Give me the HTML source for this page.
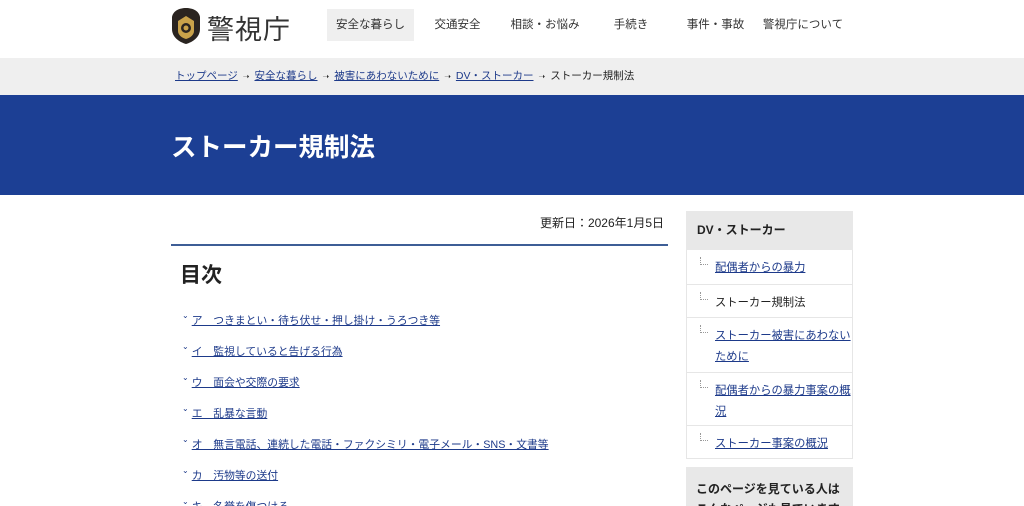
<!DOCTYPE html>
<html><head><meta charset="utf-8"><style>
*{margin:0;padding:0;box-sizing:border-box}
html,body{width:1024px;height:506px;overflow:hidden}
body{background:#fff;font-family:"Liberation Sans","Noto Sans CJK JP",sans-serif;color:#222;position:relative}
.hdr{position:absolute;top:0;left:0;width:1024px;height:58px;background:#fff}
.logo{position:absolute;left:171px;top:7px}
.site{position:absolute;left:207px;top:8px;font-size:27px;color:#333;letter-spacing:1px}
.nav{position:absolute;top:9px;height:32px;line-height:32px;font-size:11.5px;color:#333;text-align:center}
.bc{position:absolute;top:58px;left:0;width:1024px;height:37px;background:#efefef;font-size:10.5px;line-height:36px;padding-left:175px;color:#222}
.bc a{color:#1d3a8a;text-decoration:underline}
.bc .ar{margin:0 5px;font-size:8px}
.band{position:absolute;top:95px;left:0;width:1024px;height:100px;background:#1c3f94}
.band h1{position:absolute;left:171px;top:32px;color:#fff;font-size:25.5px;font-weight:bold}
.date{position:absolute;right:360px;top:214px;font-size:12px}
.rule{position:absolute;left:171px;top:244px;width:497px;height:2px;background:#3e5e96}
.mokuji{position:absolute;left:180px;top:259px;font-size:21px;font-weight:bold}
.lk{position:absolute;left:182px;font-size:10.8px;color:#1d3a8a}
.lk span{text-decoration:underline;margin-left:3px}
.lk i{font-style:normal;font-size:8px;vertical-align:top;position:relative;top:-1px}
.side{position:absolute;left:686px;top:211px;width:167px}
.sh{background:#e8e8e8;height:39px;line-height:39px;padding-left:11px;font-size:12px;font-weight:bold}
.si{border:1px solid #e6e6e6;border-top:none;padding:8px 0 8px 28px;font-size:11.3px;line-height:21px;position:relative;background:#fff;white-space:nowrap;overflow:hidden}
.si a{color:#1d3a8a;text-decoration:underline}
.si:before{content:"";position:absolute;left:13px;top:7px;width:7px;height:7px;border-left:1px dotted #999;border-bottom:1px dotted #999}
.s2{position:absolute;left:686px;top:467px;width:167px;height:50px;background:#e8e8e8;padding:12px 10px;font-size:12px;font-weight:bold;line-height:20px}
</style></head><body>
<div class="hdr">
<svg class="logo" width="30" height="38" viewBox="0 0 30 38"><path d="M15 1 C8 1 2 4 1 10 L1 22 C1 30 8 35 15 37 C22 35 29 30 29 22 L29 10 C28 4 22 1 15 1Z" fill="#2a2420"/><path d="M15 9 L23 14 L23 24 C23 28 19 31 15 32 C11 31 7 28 7 24 L7 14Z" fill="#c9a24a"/><circle cx="15" cy="21" r="5" fill="#2a2420"/><circle cx="15" cy="21" r="2.5" fill="#c9a24a"/></svg>
<div class="site">警視庁</div>
<div class="nav" style="left:327px;width:87px;background:#efefef">安全な暮らし</div>
<div class="nav" style="left:420px;width:75px">交通安全</div>
<div class="nav" style="left:500px;width:90px">相談・お悩み</div>
<div class="nav" style="left:595px;width:72px">手続き</div>
<div class="nav" style="left:678px;width:75px">事件・事故</div>
<div class="nav" style="left:758px;width:90px">警視庁について</div>
</div>
<div class="bc"><a>トップページ</a><span class="ar">➝</span><a>安全な暮らし</a><span class="ar">➝</span><a>被害にあわないために</a><span class="ar">➝</span><a>DV・ストーカー</a><span class="ar">➝</span>ストーカー規制法</div>
<div class="band"><h1>ストーカー規制法</h1></div>
<div class="date">更新日：2026年1月5日</div>
<div class="rule"></div>
<div class="mokuji">目次</div>
<div class="lk" style="top:312px"><i>⌄</i><span>ア　つきまとい・待ち伏せ・押し掛け・うろつき等</span></div>
<div class="lk" style="top:343px"><i>⌄</i><span>イ　監視していると告げる行為</span></div>
<div class="lk" style="top:374px"><i>⌄</i><span>ウ　面会や交際の要求</span></div>
<div class="lk" style="top:405px"><i>⌄</i><span>エ　乱暴な言動</span></div>
<div class="lk" style="top:436px"><i>⌄</i><span>オ　無言電話、連続した電話・ファクシミリ・電子メール・SNS・文書等</span></div>
<div class="lk" style="top:467px"><i>⌄</i><span>カ　汚物等の送付</span></div>
<div class="lk" style="top:498px"><i>⌄</i><span>キ　名誉を傷つける</span></div>
<div class="side">
<div class="sh">DV・ストーカー</div>
<div class="si" style="height:35px"><a>配偶者からの暴力</a></div>
<div class="si" style="height:33px">ストーカー規制法</div>
<div class="si" style="height:55px"><a>ストーカー被害にあわない</a><br><a>ために</a></div>
<div class="si" style="height:53px"><a>配偶者からの暴力事案の概</a><br><a>況</a></div>
<div class="si" style="height:33px"><a>ストーカー事案の概況</a></div>
</div>
<div class="s2">このページを見ている人はこんなページも見ています</div>
</body></html>
